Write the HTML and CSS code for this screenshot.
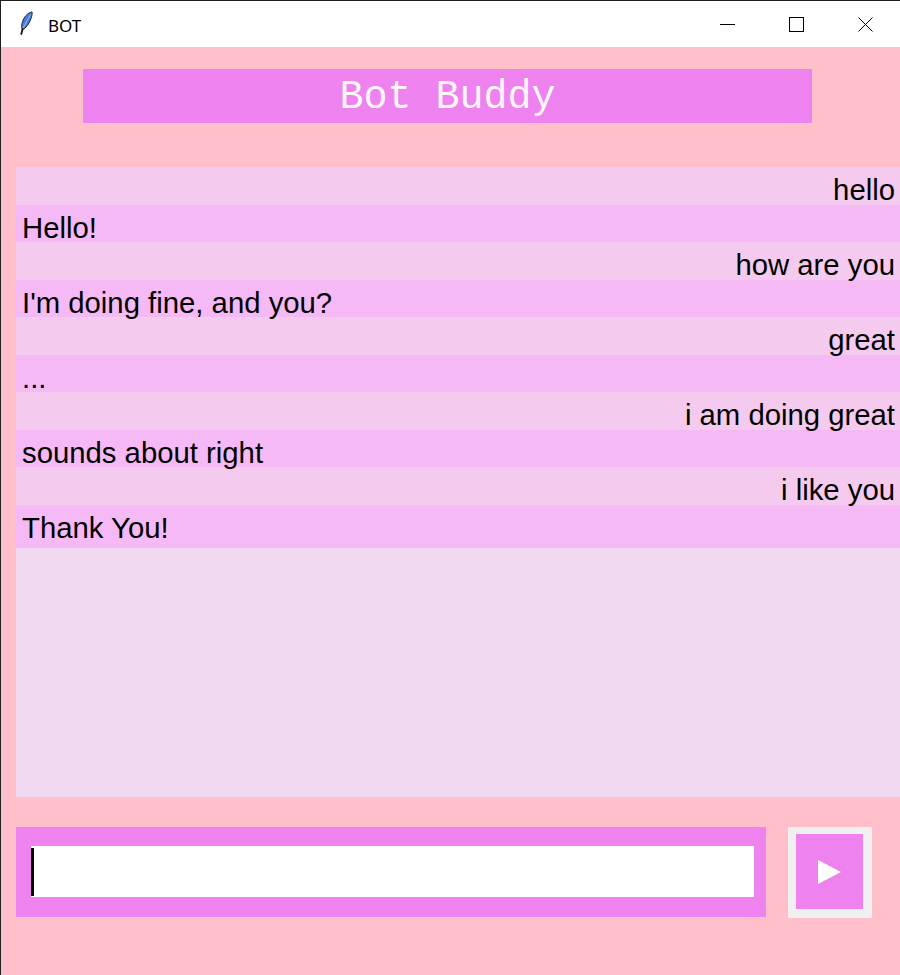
FILE: index.html
```html
<!DOCTYPE html>
<html>
<head>
<meta charset="utf-8">
<title>BOT</title>
<link rel="stylesheet" href="styles.css">
</head>
<body>
<div class="window">
  <div class="titlebar">
    <svg class="appicon" width="16" height="24" viewBox="0 0 16 24">
      <path d="M15 1 C11 1.5 6.5 6 5 12.5 C4.3 15.5 4.6 17.5 5.6 18.8 C9 17 12.5 12.5 14 7.5 C15 4.5 15.4 2.5 15 1 Z" fill="#4a7fd6" stroke="#1b2233" stroke-width="1"/>
      <path d="M13.8 3.5 C11 8 8 13 5.8 17.5" stroke="#a9c8f2" stroke-width="0.8" fill="none"/>
      <path d="M5.6 18 L4.3 23" stroke="#151515" stroke-width="1.8" stroke-linecap="round"/>
    </svg>
    <span class="title">BOT</span>
    <div class="controls">
      <div class="ctl"><svg width="15" height="15" viewBox="0 0 15 15"><path d="M0 7.5 H15" stroke="#000" stroke-width="1"/></svg></div>
      <div class="ctl"><svg width="15" height="15" viewBox="0 0 15 15"><rect x="0.5" y="0.5" width="14" height="14" fill="none" stroke="#000" stroke-width="1"/></svg></div>
      <div class="ctl"><svg width="15" height="15" viewBox="0 0 15 15"><path d="M0.5 0.5 L14.5 14.5 M14.5 0.5 L0.5 14.5" stroke="#000" stroke-width="1"/></svg></div>
    </div>
  </div>
  <div class="app">
    <div class="header">Bot Buddy</div>
    <div class="chat">
      <div class="row user">hello</div>
      <div class="row bot">Hello!</div>
      <div class="row user">how are you</div>
      <div class="row bot">I'm doing fine, and you?</div>
      <div class="row user">great</div>
      <div class="row bot">...</div>
      <div class="row user">i am doing great</div>
      <div class="row bot">sounds about right</div>
      <div class="row user">i like you</div>
      <div class="row bot last">Thank You!</div>
    </div>
    <div class="composer">
      <div class="inputframe">
        <div class="input"><span class="caret"></span></div>
      </div>
      <div class="send">
        <svg width="23" height="24" viewBox="0 0 23 24"><path d="M0 0 L23 12 L0 24 Z" fill="#fff"/></svg>
      </div>
    </div>
  </div>
</div>
</body>
</html>
```

FILE: styles.css
```css
html, body {
  margin: 0;
  padding: 0;
}
body {
  width: 900px;
  height: 975px;
  overflow: hidden;
  background: #ffc0cb;
}
.window {
  height: 975px;
  box-sizing: border-box;
  border-top: 1px solid #1f1f1f;
  border-left: 1px solid #1f1f1f;
  display: flex;
  flex-direction: column;
}
.titlebar {
  flex: none;
  height: 46px;
  background: #ffffff;
  display: flex;
  align-items: center;
}
.appicon {
  margin-left: 16px;
  margin-top: -2px;
  flex: none;
}
.title {
  margin-left: 15px;
  font-family: "Noto Sans", "Open Sans", sans-serif;
  font-size: 17px;
  color: #000;
  margin-top: 2px;
}
.controls {
  margin-left: auto;
  display: flex;
  height: 46px;
}
.ctl {
  width: 69px;
  display: flex;
  align-items: center;
  justify-content: center;
}
.ctl svg {
  display: block;
}
.app {
  flex: 1;
  background: #ffc0cb;
  display: flex;
  flex-direction: column;
}
.header {
  margin: 22px 0 0 82px;
  width: 729px;
  height: 54px;
  background: #ee82ee;
  color: #fff6fc;
  font-family: "Liberation Mono", "Courier New", monospace;
  font-size: 40px;
  line-height: 58px;
  text-align: center;
  overflow: hidden;
}
.chat {
  margin: 44px 0 0 15px;
  height: 630px;
  background: #f1d9f1;
}
.row {
  font-family: "Liberation Sans", Arial, sans-serif;
  font-size: 29.3px;
  line-height: 29.5px;
  height: 29.5px;
  padding: 8px 5px 0 6px;
  color: #000;
  white-space: nowrap;
}
.user {
  background: #f4caef;
  text-align: right;
}
.bot {
  background: #f5b9f6;
  text-align: left;
}
.last {
  padding-bottom: 6px;
}
.composer {
  margin: 30px 0 0 15px;
  display: flex;
  align-items: flex-start;
}
.inputframe {
  width: 750px;
  height: 90px;
  box-sizing: border-box;
  padding: 19px 12px 20px 15px;
  background: #ee82ee;
}
.input {
  height: 51px;
  background: #ffffff;
  overflow: hidden;
}
.caret {
  display: block;
  width: 3px;
  height: 48px;
  margin-top: 2px;
  background: #000;
}
.send {
  margin-left: 22px;
  width: 84px;
  height: 91px;
  box-sizing: border-box;
  border-style: solid;
  border-color: #f0f0f0;
  border-width: 7px 9px 9px 8px;
  background: #ee82ee;
  display: flex;
  align-items: center;
  justify-content: center;
}
.send svg {
  display: block;
}
```
